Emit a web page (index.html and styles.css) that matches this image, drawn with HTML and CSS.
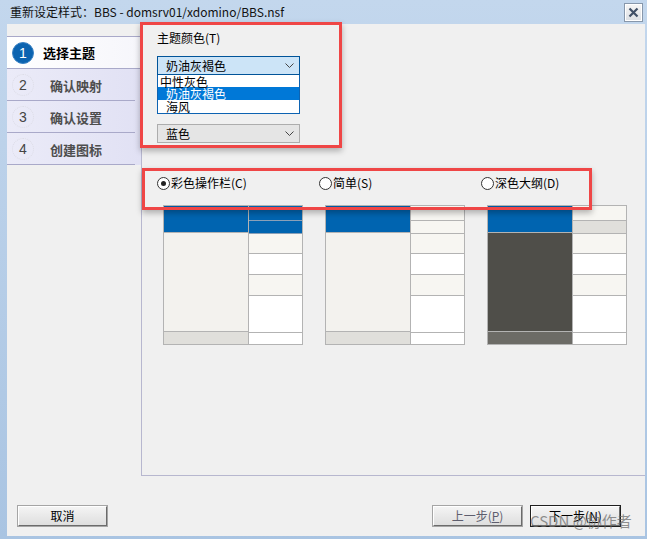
FILE: index.html
```html
<!DOCTYPE html>
<html lang="zh-CN">
<head>
<meta charset="utf-8">
<title>重新设定样式</title>
<link rel="stylesheet" href="styles.css">
</head>
<body>
<div class="window">
  <div class="titlebar">
    <span class="title">重新设定样式：BBS - domsrv01/xdomino/BBS.nsf</span>
    <span class="close"><svg width="11" height="11" viewBox="0 0 11 11"><path d="M1.5 1.5 L9.5 9.5 M9.5 1.5 L1.5 9.5" stroke="#3f4f66" stroke-width="2.2" fill="none"/></svg></span>
  </div>
  <div class="client">
    <div class="main">
      <nav class="steps">
        <div class="step active"><span class="num">1</span><span class="step-label">选择主题</span></div>
        <div class="step"><span class="num">2</span><span class="step-label">确认映射</span></div>
        <div class="step"><span class="num">3</span><span class="step-label">确认设置</span></div>
        <div class="step"><span class="num">4</span><span class="step-label">创建图标</span></div>
      </nav>
      <section class="panel">
        <div class="field-label">主题颜色(T)</div>
        <div class="select open"><span>奶油灰褐色</span><svg class="chev" width="9" height="5" viewBox="0 0 9 5"><path d="M0.5 0.5 L4.5 4.5 L8.5 0.5" stroke="#444" fill="none"/></svg></div>
        <ul class="options">
          <li class="opt first">中性灰色</li>
          <li class="opt sel">奶油灰褐色</li>
          <li class="opt">海风</li>
        </ul>
        <div class="select plain"><span>蓝色</span><svg class="chev" width="9" height="5" viewBox="0 0 9 5"><path d="M0.5 0.5 L4.5 4.5 L8.5 0.5" stroke="#444" fill="none"/></svg></div>
        <div class="styles">
          <div class="style-col">
            <div class="radio"><span class="circle checked"></span>彩色操作栏(C)</div>
            <div class="thumb">
              <div class="lcol">
                <div class="lhead"></div>
                <div class="lbody light"></div>
                <div class="lfoot light"></div>
              </div>
              <div class="rcol">
                <div class="c c1 blue"></div>
                <div class="c c2 blue"></div>
                <div class="c c3 cream"></div>
                <div class="c c4"></div>
                <div class="c c5 cream"></div>
                <div class="c c6"></div>
                <div class="c c7"></div>
              </div>
            </div>
          </div>
          <div class="style-col">
            <div class="radio"><span class="circle"></span>简单(S)</div>
            <div class="thumb">
              <div class="lcol">
                <div class="lhead"></div>
                <div class="lbody light"></div>
                <div class="lfoot light"></div>
              </div>
              <div class="rcol">
                <div class="c c1 cream"></div>
                <div class="c c2 cream"></div>
                <div class="c c3 cream"></div>
                <div class="c c4"></div>
                <div class="c c5 cream"></div>
                <div class="c c6"></div>
                <div class="c c7"></div>
              </div>
            </div>
          </div>
          <div class="style-col">
            <div class="radio"><span class="circle"></span>深色大纲(D)</div>
            <div class="thumb">
              <div class="lcol">
                <div class="lhead"></div>
                <div class="lbody dark"></div>
                <div class="lfoot dark"></div>
              </div>
              <div class="rcol">
                <div class="c c1 cream"></div>
                <div class="c c2 grey"></div>
                <div class="c c3 cream"></div>
                <div class="c c4"></div>
                <div class="c c5 cream"></div>
                <div class="c c6"></div>
                <div class="c c7"></div>
              </div>
            </div>
          </div>
        </div>
      </section>
    </div>
    <div class="footer">
      <button class="btn">取消</button>
      <div class="nav-btns">
        <button class="btn dim">上一步(<u>P</u>)</button>
        <button class="btn default">下一步(<u>N</u>)</button>
      </div>
    </div>
  </div>
  <div class="anno anno1"></div>
  <div class="anno anno2"></div>
  <div class="watermark">CSDN @协作者</div>
</div>
</body>
</html>
```

FILE: styles.css
```css
* { box-sizing: border-box; }
html, body { margin: 0; padding: 0; }
body {
  width: 647px;
  height: 539px;
  overflow: hidden;
  font-family: "Noto Sans CJK SC", "Noto Sans", sans-serif;
  font-size: 12px;
  color: #000;
}
.window {
  position: relative;
  width: 647px;
  height: 539px;
  background: linear-gradient(#c3d7ed, #a9c4e2);
  display: flex;
  flex-direction: column;
}
.titlebar {
  height: 24px;
  display: flex;
  align-items: center;
  padding-left: 10px;
  padding-right: 4px;
}
.title {
  flex: 1;
  font-size: 12px;
  color: #111;
  line-height: 24px;
}
.close {
  width: 19px;
  height: 19px;
  margin-top: 1px;
  display: flex;
  align-items: center;
  justify-content: center;
  background: linear-gradient(#f6f6f6, #dcdfe4);
  border: 1px solid #8797ab;
  box-shadow: inset 0 0 0 1px #fff;
}
.client {
  margin: 0 2px 3px 7px;
  height: 512px;
  background: #f0f0f0;
  display: flex;
  flex-direction: column;
}
.main {
  height: 452px;
  display: flex;
}
.steps {
  width: 134px;
  padding-top: 12px;
}
.step {
  height: 32px;
  display: flex;
  align-items: center;
  background:
    linear-gradient(#a9a9c9, #a9a9c9) no-repeat left bottom / 128px 1px,
    linear-gradient(to right, #ebebf8, #e1e1f4);
  color: #4e4e4e;
  font-weight: bold;
  font-size: 13px;
}
.step.active {
  border-top: 1px solid #a9a9c9;
  border-bottom: 1px solid #a9a9c9;
  background: linear-gradient(to right, #ffffff, #f6f6fb);
  height: 33px;
  color: #000;
}
.num {
  width: 22px;
  height: 22px;
  margin-left: 5px;
  border-radius: 50%;
  border: 1px dotted #dcdce6;
  display: flex;
  align-items: center;
  justify-content: center;
  font-weight: normal;
  font-family: "Liberation Sans", sans-serif;
  font-size: 14px;
  color: #444;
}
.step.active .num {
  background: #0b63b0;
  border: 1px solid #3a82c4;
  color: #fff;
}
.step-label { margin-left: 16px; }
.step.active .step-label { margin-left: 9px; }
.panel {
  flex: 1;
  border-left: 1px solid #b7b7cf;
  border-bottom: 1px solid #b7b7cf;
  padding: 6px 0 0 15px;
}
.field-label {
  line-height: 16px;
  height: 16px;
}
.select {
  margin-top: 10px;
  width: 143px;
  height: 19px;
  display: flex;
  align-items: center;
  justify-content: space-between;
  padding: 0 5px 0 8px;
  line-height: 17px;
}
.select.open {
  background: #cce4f7;
  border: 1px solid #005499;
}
.select.plain {
  background: #e5e5e5;
  border: 1px solid #adadad;
}
.options {
  list-style: none;
  margin: 0;
  padding: 0;
  width: 143px;
  height: 39px;
  background: #fff;
  border: 1px solid #0d63b2;
  border-top: none;
}
.opt {
  height: 13px;
  line-height: 13px;
  padding-left: 8px;
}
.opt.first { height: 12px; padding-left: 2px; }
.opt.sel {
  height: 13px;
  background: #0078d7;
  color: #fff;
}
.select.plain { margin-top: 10px; }
.styles {
  margin-top: 33px;
  display: flex;
}
.style-col {
  width: 162px;
  display: flex;
  flex-direction: column;
}
.radio {
  height: 14px;
  display: flex;
  align-items: center;
  line-height: 14px;
}
.circle {
  width: 13px;
  height: 13px;
  border-radius: 50%;
  border: 1px solid #333;
  background: #fff;
  margin-right: 1px;
  display: flex;
  align-items: center;
  justify-content: center;
}
.circle.checked::after {
  content: "";
  width: 5px;
  height: 5px;
  border-radius: 50%;
  background: #222;
}
.thumb {
  margin-top: 15px;
  margin-left: 6px;
  width: 140px;
  height: 140px;
  border: 1px solid #b3b3b3;
  display: flex;
}
.lcol {
  width: 85px;
  border-right: 1px solid #b3b3b3;
  display: flex;
  flex-direction: column;
}
.lhead {
  height: 27px;
  background: linear-gradient(#005aa3, #0064b0 4px);
  border-bottom: 1px solid #b3b3b3;
}
.lbody { flex: 1; border-bottom: 1px solid #b3b3b3; }
.lbody.light { background: #f3f2ee; }
.lbody.dark { background: #4f4e49; }
.lfoot { height: 12px; }
.lfoot.light { background: #e0dfdb; }
.lfoot.dark { background: #6c6b66; }
.rcol {
  flex: 1;
  display: flex;
  flex-direction: column;
}
.c { border-bottom: 1px solid #b3b3b3; background: #fff; }
.c1 { height: 15px; }
.c2 { height: 13px; }
.c3 { height: 20px; }
.c4 { height: 21px; }
.c5 { height: 21px; }
.c6 { height: 37px; }
.c7 { flex: 1; border-bottom: none; }
.c.blue { background: #0064b0; border-bottom-color: #8aa0b8; }
.c.cream { background: #f7f6f2; }
.c.grey { background: #e0dfdb; }
.footer {
  flex: 1;
  display: flex;
  align-items: flex-start;
  padding: 30px 25px 0 11px;
}
.nav-btns {
  margin-left: auto;
  display: flex;
  gap: 9px;
}
.btn {
  width: 89px;
  height: 20px;
  padding: 0;
  font-family: "Noto Sans CJK SC", "Noto Sans", sans-serif;
  font-size: 12px;
  line-height: 16px;
  color: #000;
  background: linear-gradient(#f4f4f4, #dedede);
  border: 1px solid;
  border-color: #ffffff #6b6b6b #6b6b6b #ffffff;
  box-shadow: 0 0 0 1px #a5a5a5;
}
.btn u { text-decoration: underline; }
.btn.dim { color: #5e5e6e; }
.btn.default {
  box-shadow: 0 0 0 1px #1f1f1f;
}
.anno {
  position: absolute;
  border: 3px solid #ef4646;
  box-shadow: 0 3px 6px rgba(0, 0, 0, 0.28);
}
.anno1 { left: 140px; top: 22px; width: 202px; height: 126px; }
.anno2 { left: 142px; top: 168px; width: 450px; height: 42px; }
.watermark {
  position: absolute;
  left: 530px;
  top: 511px;
  font-size: 15px;
  line-height: 20px;
  color: rgba(105, 105, 105, 0.72);
  font-family: "Noto Sans CJK SC", "Noto Sans", sans-serif;
}
```
